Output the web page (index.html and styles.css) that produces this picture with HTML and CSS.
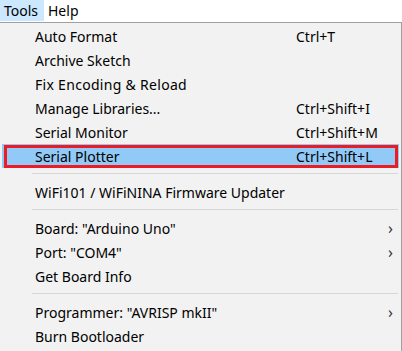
FILE: index.html
```html
<!DOCTYPE html>
<html lang="en">
<head>
  <meta charset="UTF-8" />
  <title>Tools menu</title>
  <link rel="stylesheet" href="styles.css">
</head>
<body>

  <div class="menubar">
    <div class="menubar-item open">Tools</div>
    <div class="menubar-item">Help</div>
  </div>

  <div class="menu">
    <div class="item"><span class="label">Auto Format</span><span class="key">Ctrl+T</span></div>
    <div class="item"><span class="label">Archive Sketch</span></div>
    <div class="item"><span class="label wide">Fix Encoding &amp; Reload</span></div>
    <div class="item"><span class="label">Manage Libraries...</span><span class="key">Ctrl+Shift+I</span></div>
    <div class="item"><span class="label">Serial Monitor</span><span class="key">Ctrl+Shift+M</span></div>
    <div class="item selected"><span class="label">Serial Plotter</span><span class="key">Ctrl+Shift+L</span></div>
    <div class="sep"></div>
    <div class="item"><span class="label">WiFi101 / WiFiNINA Firmware Updater</span></div>
    <div class="sep"></div>
    <div class="item"><span class="label">Board: "Arduino Uno"</span><span class="arrow">&#x203A;</span></div>
    <div class="item"><span class="label">Port: "COM4"</span><span class="arrow">&#x203A;</span></div>
    <div class="item"><span class="label">Get Board Info</span></div>
    <div class="sep"></div>
    <div class="item"><span class="label">Programmer: "AVRISP mkII"</span><span class="arrow">&#x203A;</span></div>
    <div class="item"><span class="label">Burn Bootloader</span></div>
  </div>

</body>
</html>
```

FILE: styles.css
```css
body {
  margin: 0;
  font-family: 'Noto Sans', 'Open Sans', sans-serif;
  font-size: 14px;
  color: #000;
  background: #fff;
  width: 402px;
  height: 351px;
  overflow: hidden;
}
.menubar {
  display: flex;
  height: 22px;
  background: #fff;
}
.menubar-item {
  padding: 0 5px;
  line-height: 21px;
  height: 21px;
}
.menubar-item.open {
  background: #cce8ff;
  padding: 0 4px 0 4px;
  width: 36px;
}
.menubar-item + .menubar-item {
  padding-left: 4px;
}
.menu {
  border-top: 1px solid #a0a0a0;
  border-right: 1px solid #a0a0a0;
  background: #f2f2f2;
  padding-top: 1px;
  height: 340px;
}
.item {
  display: flex;
  align-items: center;
  height: 24px;
  margin: 0 2px;
  padding-left: 33px;
  position: relative;
}
.label {
  width: 261px;
  white-space: nowrap;
}
.wide {
  letter-spacing: 0.3px;
}
.key {
  white-space: nowrap;
}
.arrow {
  margin-left: auto;
  margin-right: 6px;
  font-size: 16px;
  color: #333;
}
.selected {
  background: #91c9f7;
}
.selected::after {
  content: "";
  position: absolute;
  left: 2px;
  right: 1px;
  top: 1px;
  bottom: 0;
  border: 3px solid #ed1c24;
}
.sep {
  height: 1px;
  background: #d7d7d7;
  margin: 5px 3px 6px 32px;
}
```
